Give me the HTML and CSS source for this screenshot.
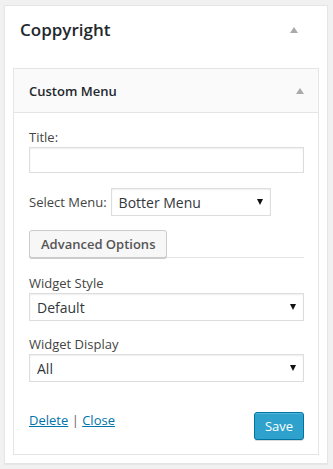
FILE: index.html
```html
<!DOCTYPE html>
<html lang="en">
<head>
    <meta charset="UTF-8">
    <title>Coppyright</title>
    <link rel="stylesheet" href="styles.css">
</head>
<body>
    <div class="panel">
        <div class="panel-head">
            <h3 class="panel-title">Coppyright</h3>
            <span class="toggle"></span>
        </div>
        <div class="widget">
            <div class="widget-head">
                <span class="widget-title">Custom Menu</span>
                <span class="toggle"></span>
            </div>
            <div class="widget-body">
                <label class="field-label" for="title">Title:</label>
                <input class="text-input" id="title" type="text">

                <div class="menu-row">
                    <label for="menu">Select Menu:</label>
                    <div class="select-wrap short">
                        <select id="menu"><option>Botter Menu</option></select>
                    </div>
                </div>

                <div class="tabs">
                    <button class="btn">Advanced Options</button>
                </div>

                <label class="field-label" for="style">Widget Style</label>
                <div class="select-wrap">
                    <select id="style"><option>Default</option></select>
                </div>

                <label class="field-label" for="display">Widget Display</label>
                <div class="select-wrap">
                    <select id="display"><option>All</option></select>
                </div>

                <div class="actions">
                    <div class="links">
                        <a href="#">Delete</a> | <a href="#">Close</a>
                    </div>
                    <button class="btn-primary">Save</button>
                </div>
            </div>
        </div>
    </div>
</body>
</html>
```

FILE: styles.css
```css
body {
    margin: 0;
    padding: 5px 5px 6px 4px;
    background: #f1f1f1;
    font-family: 'Open Sans', 'Liberation Sans', sans-serif;
    font-size: 13px;
    color: #444;
}
.panel {
    background: #fff;
    border: 1px solid #e5e5e5;
    box-shadow: 0 1px 1px rgba(0,0,0,0.04);
    padding: 0 8px 9px 8px;
    height: 459px;
    box-sizing: border-box;
}
.panel-head {
    display: flex;
    align-items: center;
    justify-content: space-between;
    height: 47px;
    padding: 0 21px 0 7px;
    margin-bottom: 15px;
}
.panel-title {
    margin: 0;
    font-size: 17px;
    font-weight: 600;
    color: #23282d;
}
.toggle {
    width: 0;
    height: 0;
    border-left: 4.5px solid transparent;
    border-right: 4.5px solid transparent;
    border-bottom: 6px solid #aaa;
}
.widget {
    border: 1px solid #e5e5e5;
    background: #fff;
}
.widget-head {
    display: flex;
    align-items: center;
    justify-content: space-between;
    height: 43px;
    padding: 0 14px 0 15px;
    background: #fafafa;
    border-bottom: 1px solid #e5e5e5;
}
.widget-title {
    font-weight: 600;
    font-size: 13px;
    color: #23282d;
}
.widget-body {
    padding: 15px 14px 14px 15px;
}
.field-label {
    display: block;
    line-height: 18px;
    margin-bottom: 1px;
}
.text-input, select {
    display: block;
    width: 100%;
    box-sizing: border-box;
    border: 1px solid #ddd;
    box-shadow: inset 0 1px 2px rgba(0,0,0,0.07);
    background: #fff;
    font-family: inherit;
    color: #32373c;
    margin: 0;
}
.text-input {
    height: 26px;
    margin-bottom: 15px;
}
select {
    height: 28px;
    padding: 0 20px 0 7px;
    font-size: 14px;
    -webkit-appearance: none;
    appearance: none;
    border-radius: 0;
}
.select-wrap {
    position: relative;
    margin-bottom: 14px;
}
.select-wrap::after {
    content: "";
    position: absolute;
    right: 8px;
    top: 11px;
    border-left: 3.5px solid transparent;
    border-right: 3.5px solid transparent;
    border-top: 6px solid #111;
}
.menu-row {
    display: flex;
    align-items: center;
    gap: 4px;
    margin-bottom: 14px;
}
.menu-row .select-wrap {
    width: 160px;
    margin-bottom: 0;
}
.tabs {
    display: flex;
    border-bottom: 1px solid #e5e5e5;
    height: 27px;
    margin-bottom: 16px;
}
.btn {
    height: 28px;
    padding: 0 11px;
    background: #f7f7f7;
    border: 1px solid #ccc;
    border-radius: 3px;
    box-shadow: 0 1px 0 #ccc;
    font-family: inherit;
    font-size: 13px;
    font-weight: 600;
    color: #555;
}
.actions {
    display: flex;
    align-items: center;
    justify-content: space-between;
    margin-top: 30px;
}
.links {
    color: #666;
    margin-top: -12px;
}
.links a {
    color: #0073aa;
    text-decoration: underline;
}
.btn-primary {
    width: 50px;
    height: 28px;
    background: #2ea2cc;
    border: 1px solid #0074a2;
    border-radius: 3px;
    box-shadow: inset 0 1px 0 rgba(120,200,230,0.5), 0 1px 0 rgba(0,0,0,0.15);
    color: #fff;
    font-family: inherit;
    font-size: 13px;
    padding: 0;
}
```
